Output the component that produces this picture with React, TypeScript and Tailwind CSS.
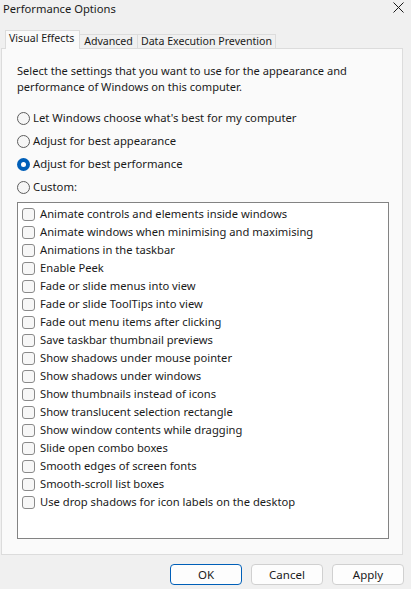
import React from "react";

const effects = [
  "Animate controls and elements inside windows",
  "Animate windows when minimising and maximising",
  "Animations in the taskbar",
  "Enable Peek",
  "Fade or slide menus into view",
  "Fade or slide ToolTips into view",
  "Fade out menu items after clicking",
  "Save taskbar thumbnail previews",
  "Show shadows under mouse pointer",
  "Show shadows under windows",
  "Show thumbnails instead of icons",
  "Show translucent selection rectangle",
  "Show window contents while dragging",
  "Slide open combo boxes",
  "Smooth edges of screen fonts",
  "Smooth-scroll list boxes",
  "Use drop shadows for icon labels on the desktop",
];

const choices = [
  { label: "Let Windows choose what's best for my computer", checked: false },
  { label: "Adjust for best appearance", checked: false },
  { label: "Adjust for best performance", checked: true },
  { label: "Custom:", checked: false },
];

function Radio({ checked }: { checked: boolean }) {
  if (checked) {
    return (
      <span className="flex h-[13px] w-[13px] shrink-0 items-center justify-center rounded-full bg-[#005fb8]">
        <span className="h-[5px] w-[5px] rounded-full bg-white" />
      </span>
    );
  }
  return <span className="h-[13px] w-[13px] shrink-0 rounded-full border border-[#5d5d5d] bg-[#f6f6f6]" />;
}

export default function App() {
  return (
    <div className="relative h-[589px] w-[411px] overflow-hidden bg-[#f0f0f0] text-[11.2px] text-[#1a1a1a] [font-family:'Noto_Sans',sans-serif]">
      {/* title bar */}
      <div className="flex h-[17px] items-center justify-between pl-[3px] pr-[7px]">
        <span className="text-[11.2px] leading-[17px]">Performance Options</span>
        <svg width="11" height="11" viewBox="0 0 11 11" className="mt-[-2px]">
          <path d="M0.5 0.5 L10.5 10.5 M10.5 0.5 L0.5 10.5" stroke="#1a1a1a" strokeWidth="1" />
        </svg>
      </div>

      {/* tabs */}
      <div className="mt-[13px] flex items-end whitespace-nowrap pl-[5px] text-[10.6px]">
        <div className="relative z-10 mb-[-1px] flex h-[19px] w-[75px] items-center border border-b-0 border-[#dcdcdc] bg-[#fafafa] pb-[2px] pl-[3px]">
          Visual Effects
        </div>
        <div className="flex h-[14px] w-[58px] items-center justify-center border border-l-0 border-b-0 border-[#dcdcdc] bg-[#f0f0f0]">
          Advanced
        </div>
        <div className="flex h-[14px] w-[138px] items-center justify-center border border-l-0 border-b-0 border-[#dcdcdc] bg-[#f0f0f0]">
          Data Execution Prevention
        </div>
      </div>

      {/* panel */}
      <div className="ml-[1px] flex h-[507px] w-[402px] flex-col border border-[#dcdcdc] bg-[#fafafa] pl-[15px] pt-[14px]">
        <p className="text-[11.1px] leading-[16px]">
          Select the settings that you want to use for the appearance and
          <br />
          performance of Windows on this computer.
        </p>

        <div className="mt-[12px] flex flex-col text-[11.3px]">
          {choices.map((c) => (
            <div key={c.label} className="flex h-[23px] items-center gap-[3px]">
              <Radio checked={c.checked} />
              <span>{c.label}</span>
            </div>
          ))}
        </div>

        <div className="mt-[3px] flex h-[337px] w-[372px] flex-col border border-[#838383] bg-white pl-[4px] pt-[2px] text-[11.2px]">
          {effects.map((e) => (
            <div key={e} className="flex h-[18px] items-center gap-[5px]">
              <span className="h-[13px] w-[13px] shrink-0 rounded-[3px] border border-[#8a8a8a] bg-[#f7f7f7]" />
              <span>{e}</span>
            </div>
          ))}
        </div>
      </div>

      {/* buttons */}
      <div className="mt-[9px] flex justify-end gap-[9px] pr-[7px]">
        <button className="h-[21px] w-[72px] rounded-[4px] border border-[#005fb8] bg-[#fdfdfd] text-[11.5px] leading-none">
          OK
        </button>
        <button className="h-[21px] w-[72px] rounded-[4px] border border-[#d0d0d0] bg-[#fdfdfd] text-[11.5px] leading-none">
          Cancel
        </button>
        <button className="h-[21px] w-[72px] rounded-[4px] border border-[#d0d0d0] bg-[#fdfdfd] text-[11.5px] leading-none">
          Apply
        </button>
      </div>
    </div>
  );
}
